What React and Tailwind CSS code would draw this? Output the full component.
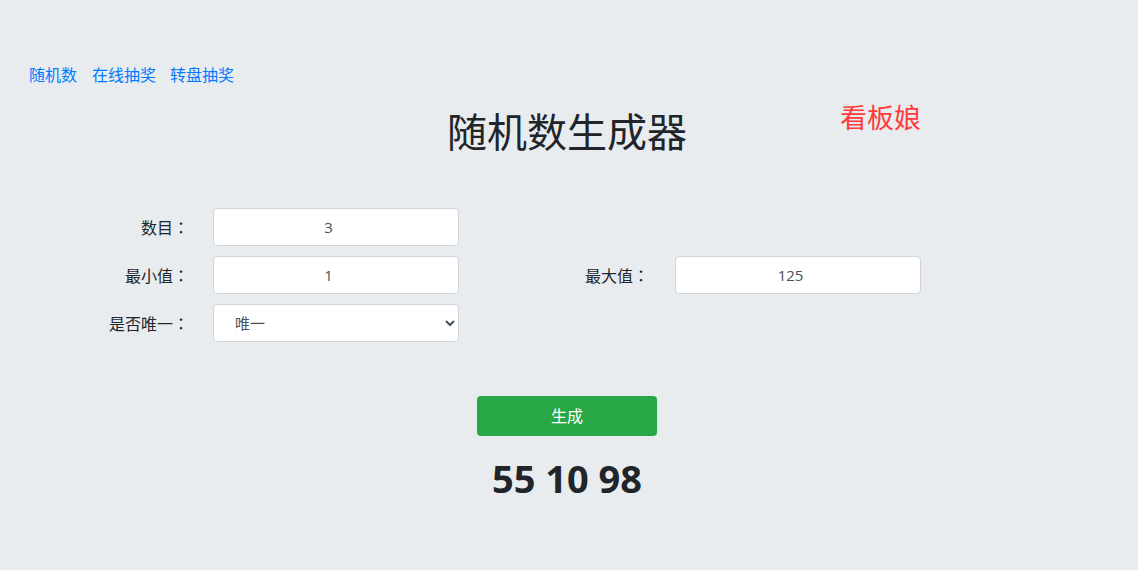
import { useState } from "react";

const font = {
  fontFamily: '"Open Sans", "Noto Sans CJK SC", sans-serif',
};

// centred full-width colon, as in the reference
function Colon() {
  return <span style={{ fontFamily: '"Noto Sans CJK TC", sans-serif' }}>：</span>;
}

function Field({ label, labelWidth, gap, value }) {
  return (
    <div className="flex items-center">
      <label
        className="text-right text-[16px] text-[#212529]"
        style={{ width: labelWidth, marginRight: gap }}
      >
        {label}
        <Colon />
      </label>
      <input
        type="number"
        defaultValue={value}
        className="w-[246px] h-[38px] rounded-[4px] border border-[#ced4da] bg-white text-center text-[15px] text-[#495057] outline-none"
      />
    </div>
  );
}

export default function App() {
  const [result] = useState("55 10 98");

  return (
    <main
      className="relative min-h-[570px] w-full bg-[#e9ecef] text-[#212529]"
      style={font}
    >
      <nav className="flex pl-[29px] pt-[63px] text-[16px] leading-[24px]">
        <a href="#" className="text-[#007bff]">随机数</a>
        <a href="#" className="ml-[15px] text-[#007bff]">在线抽奖</a>
        <a href="#" className="ml-[14px] text-[#007bff]">转盘抽奖</a>
      </nav>

      <h1 className="mt-[21px] pr-[4px] text-center text-[40px] font-normal leading-[48px]">
        随机数生成器
      </h1>

      <span className="absolute left-[840px] top-[98px] text-[27px] text-[#ff3b3b]">
        看板娘
      </span>

      <form className="mt-[52px] flex flex-col gap-[10px]">
        <Field label="数目" labelWidth={189} gap={24} value="3" />
        <div className="flex items-center">
          <Field label="最小值" labelWidth={189} gap={24} value="1" />
          <Field label="最大值" labelWidth={190} gap={26} value="125" />
        </div>
        <div className="flex items-center">
          <label className="mr-[24px] w-[189px] text-right text-[16px]">
            是否唯一
            <Colon />
          </label>
          <select
            defaultValue="1"
            className="h-[38px] w-[246px] rounded-[4px] border border-[#ced4da] bg-white pl-[17px] text-[15px] text-[#495057] outline-none"
          >
            <option value="1">唯一</option>
            <option value="0">不唯一</option>
          </select>
        </div>
      </form>

      <div className="mt-[54px] flex flex-col items-center pr-[4px]">
        <button
          type="button"
          className="h-[40px] w-[180px] rounded-[4px] bg-[#28a745] text-[16px] text-white"
        >
          生成
        </button>
        <div className="mt-[19px] text-[38px] font-bold leading-[46px]">
          {result}
        </div>
      </div>
    </main>
  );
}
